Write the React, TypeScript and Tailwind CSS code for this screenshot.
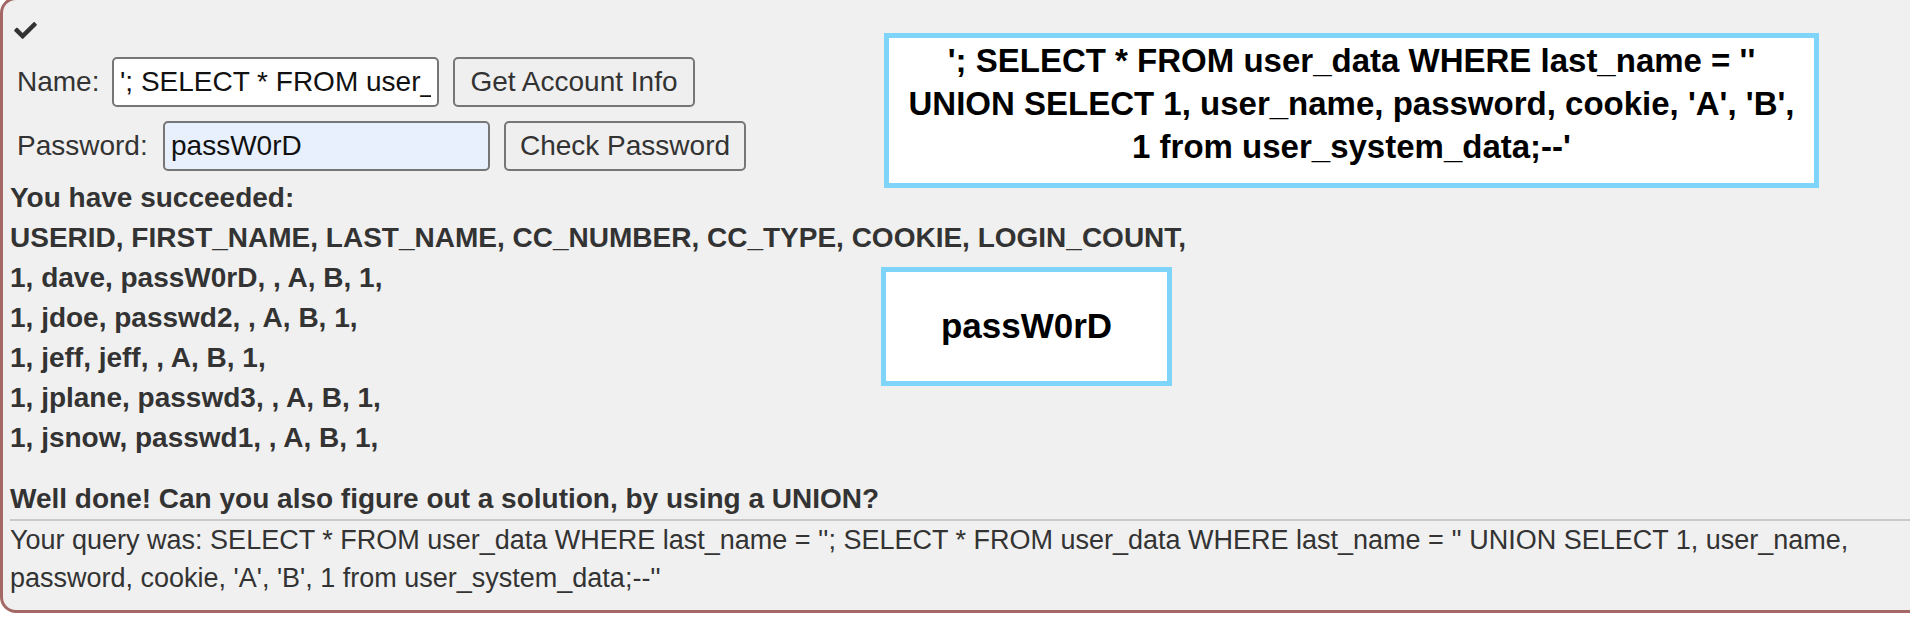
export default function App() {
  const sql =
    "'; SELECT * FROM user_data WHERE last_name = '' UNION SELECT 1, user_name, password, cookie, 'A', 'B', 1 from user_system_data;--'"

  const rows = [
    "USERID, FIRST_NAME, LAST_NAME, CC_NUMBER, CC_TYPE, COOKIE, LOGIN_COUNT,",
    "1, dave, passW0rD, , A, B, 1,",
    "1, jdoe, passwd2, , A, B, 1,",
    "1, jeff, jeff, , A, B, 1,",
    "1, jplane, passwd3, , A, B, 1,",
    "1, jsnow, passwd1, , A, B, 1,",
  ]

  return (
    <div className="relative h-[618px] w-[1910px] overflow-hidden bg-white font-['Liberation_Sans',Arial,sans-serif] text-[28px] text-[#333]">
      {/* Lesson panel */}
      <div className="-mt-[3px] w-[1950px] rounded-[16px] border-[3px] border-[#a46966] bg-[#f0f0f0] pl-[7px] pt-[22px]">
        <svg viewBox="0 64 512 384" className="ml-[4px] block h-[17px] w-[23px]" fill="#333">
          <path d="M173.898 439.404l-166.4-166.4c-9.997-9.997-9.997-26.206 0-36.204l36.203-36.204c9.997-9.998 26.207-9.998 36.204 0L192 312.69 432.095 72.596c9.997-9.997 26.207-9.997 36.204 0l36.203 36.204c9.997 9.997 9.997 26.206 0 36.204l-294.4 294.401c-9.998 9.997-26.207 9.997-36.204-.001z" />
        </svg>

        {/* Form */}
        <div className="mt-[18px] flex flex-col gap-[14px] pl-[7px]">
          <div className="flex items-center">
            <span className="w-[95px]">Name:</span>
            <input
              readOnly
              value={sql}
              className="h-[50px] w-[327px] rounded-[5px] border-2 border-[#767676] bg-white px-[6px] text-[28px] text-[#111] outline-none"
            />
            <button className="ml-[14px] h-[50px] w-[242px] rounded-[5px] border-2 border-[#767676] bg-[#efefef] text-[28px] text-[#333]">
              Get Account Info
            </button>
          </div>
          <div className="flex items-center">
            <span className="w-[146px]">Password:</span>
            <input
              readOnly
              value="passW0rD"
              className="h-[50px] w-[327px] rounded-[5px] border-2 border-[#767676] bg-[#e8f0fe] px-[6px] text-[28px] text-[#111] outline-none"
            />
            <button className="ml-[14px] h-[50px] w-[242px] rounded-[5px] border-2 border-[#767676] bg-[#efefef] text-[28px] text-[#333]">
              Check Password
            </button>
          </div>
        </div>

        {/* Results */}
        <div className="mt-[7px] font-bold leading-[40px]">
          <p>You have succeeded:</p>
          {rows.map((r) => (
            <p key={r}>{r}</p>
          ))}
        </div>

        <p className="mt-[21px] font-bold leading-[40px]">
          Well done! Can you also figure out a solution, by using a UNION?
        </p>
        <div className="h-[2px] bg-[#cacaca]" />
        <p className="pb-[13px] text-[27px] leading-[38px]">
          Your query was: SELECT * FROM user_data WHERE last_name = ''; SELECT * FROM user_data WHERE last_name = '' UNION SELECT 1, user_name,
          <br />
          password, cookie, 'A', 'B', 1 from user_system_data;--''
        </p>
      </div>

      {/* Annotation: injected query */}
      <div className="absolute left-[884px] top-[33px] h-[155px] w-[935px] border-[5px] border-[#7fd4fa] bg-white pt-[1px] text-center text-[33px] font-bold leading-[43px] text-black">
        '; SELECT * FROM user_data WHERE last_name = ''
        <br />
        UNION SELECT 1, user_name, password, cookie, 'A', 'B',
        <br />
        1 from user_system_data;--'
      </div>

      {/* Annotation: password found */}
      <div className="absolute left-[881px] top-[267px] flex h-[119px] w-[291px] items-center justify-center border-[5px] border-[#7fd4fa] bg-white text-[35px] font-bold text-black">
        passW0rD
      </div>
    </div>
  )
}
